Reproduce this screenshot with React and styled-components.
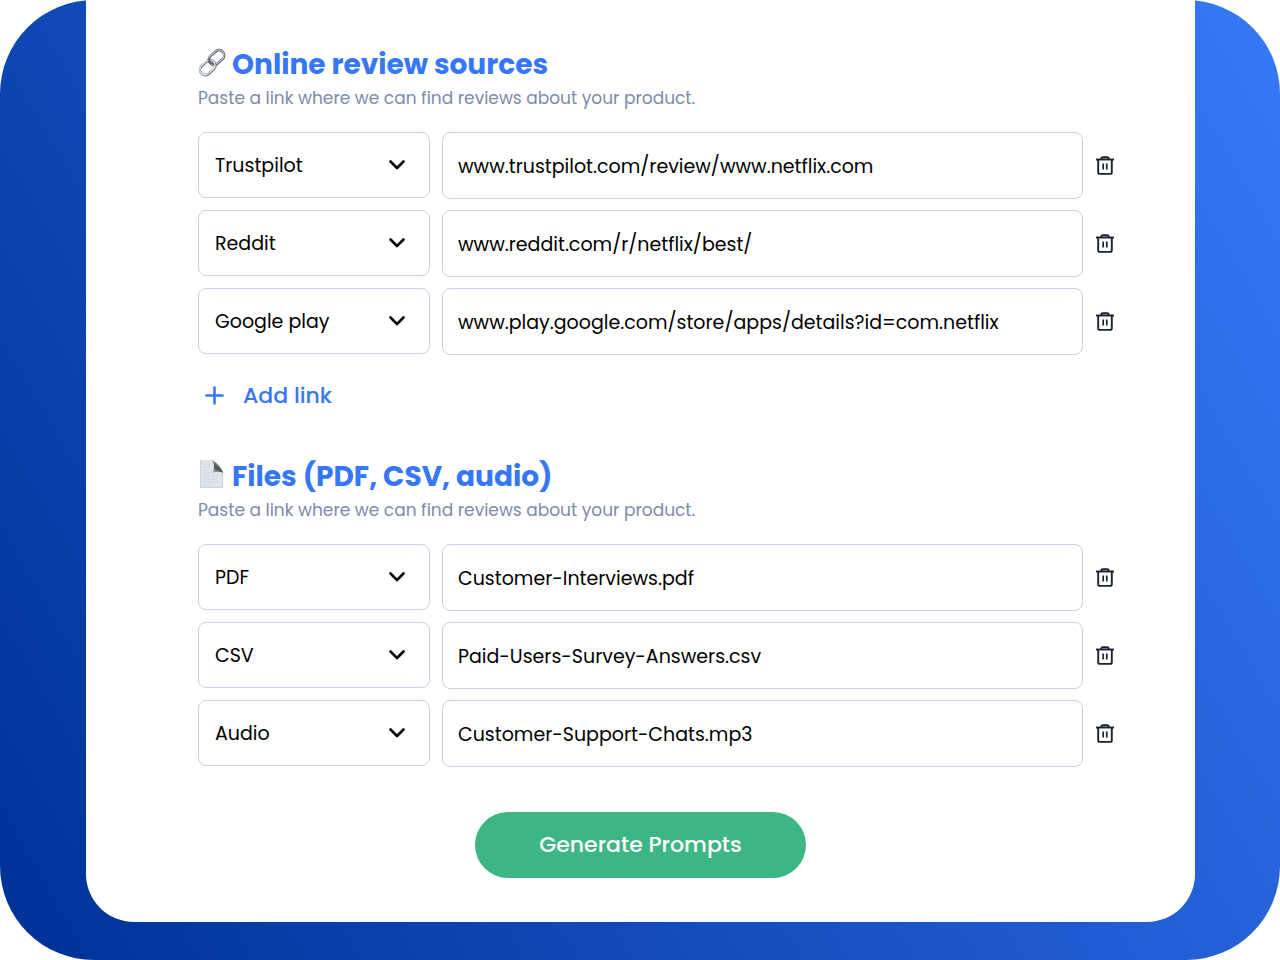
import { useState } from 'react';
import styled, { createGlobalStyle } from 'styled-components';

const GlobalStyle = createGlobalStyle`
  * {
    box-sizing: border-box;
  }
  body {
    margin: 0;
    background: #ffffff;
    font-family: Poppins, Inter, sans-serif;
    color: #000000;
  }
  button, input, select {
    font-family: inherit;
    color: inherit;
  }
`;

const Stage = styled.div`
  min-height: 100vh;
  padding: 0 85px 38px 86px;
  border-radius: 94px;
  background: linear-gradient(60deg, #003399 3%, #3577f6 98%);
`;

const Card = styled.form`
  display: flex;
  flex-direction: column;
  padding: 45px 112px 44px;
  background: #ffffff;
  border-radius: 0 0 48px 48px;
`;

const Section = styled.section`
  & + & {
    margin-top: 46px;
  }
`;

const Heading = styled.h2`
  display: flex;
  align-items: flex-start;
  gap: 6px;
  margin: 0;
  font-size: 28px;
  line-height: 40px;
  font-weight: 700;
  color: #3577f6;
`;

const HeadingIcon = styled.svg`
  width: 28px;
  height: 34px;
  flex: none;
`;

const Hint = styled.p`
  margin: 1px 0 22px;
  font-size: 17px;
  line-height: 24px;
  color: #7d8ba8;
`;

/* the delete buttons hang into the card's right padding */
const Rows = styled.div`
  display: grid;
  gap: 11px;
  margin-right: -32px;
`;

const Row = styled.div`
  display: grid;
  grid-template-columns: 232px 1fr 20px;
  column-gap: 12px;
  align-items: center;
`;

const SelectBox = styled.div`
  position: relative;
  align-self: start;
`;

const Select = styled.select`
  appearance: none;
  display: block;
  width: 100%;
  height: 66px;
  padding: 0 48px 0 16px;
  border: 1px solid #c9d1e1;
  border-radius: 8px;
  background: #ffffff;
  font-size: 19px;
`;

const Chevron = styled.svg`
  position: absolute;
  right: 24px;
  top: 24px;
  width: 18px;
  height: 18px;
  pointer-events: none;
`;

const TextField = styled.input`
  width: 100%;
  height: 67px;
  padding: 1px 15px 0;
  border: 1px solid #c9d1e1;
  border-radius: 8px;
  background: #ffffff;
  font-size: 19px;
`;

const PlainButton = styled.button`
  display: flex;
  align-items: center;
  padding: 0;
  border: 0;
  background: none;
  cursor: pointer;
`;

const AddButton = styled(PlainButton)`
  gap: 19px;
  height: 32px;
  margin: 24px 0 0 7px;
  font-size: 22px;
  font-weight: 500;
  color: #3577f6;
`;

const SubmitButton = styled.button`
  align-self: center;
  height: 66px;
  margin-top: 45px;
  padding: 0 64px 2px;
  border: 0;
  border-radius: 33px;
  background: #3db685;
  font-size: 22px;
  font-weight: 500;
  color: #ffffff;
  cursor: pointer;
`;

const LinkIcon = () => (
  <HeadingIcon viewBox="0 0 28 28" fill="none" aria-hidden="true">
    <g transform="rotate(-42 18.5 9.5)">
      <rect x="10" y="4.300" width="17" height="10.400" rx="5.200" stroke="#4b5057" strokeWidth="2.600" />
      <rect x="10" y="4" width="17" height="10.400" rx="5.200" stroke="#b9c2cf" strokeWidth="1.400" />
    </g>
    <g transform="rotate(-42 9.500 19.500)">
      <rect x="1" y="14.600" width="17" height="10.400" rx="5.200" stroke="#5b626b" strokeWidth="2.600" />
      <rect x="1" y="14.200" width="17" height="10.400" rx="5.200" stroke="#d8dfe9" strokeWidth="1.600" />
    </g>
    <path d="M11.500 10.500c-.7 2.500.5 4.500 3.500 5.500" stroke="#565c64" strokeWidth="1.800" strokeLinecap="round" />
  </HeadingIcon>
);

const PageIcon = () => (
  <HeadingIcon viewBox="0 0 28 28" fill="none" aria-hidden="true">
    <defs>
      <linearGradient id="fold" x1="15" y1="12" x2="21" y2="3" gradientUnits="userSpaceOnUse">
        <stop offset="0" stopColor="#a9adac" />
        <stop offset="0.5" stopColor="#4d5251" />
        <stop offset="1" stopColor="#8f9493" />
      </linearGradient>
    </defs>
    <path d="M2 0h11.500c2 0 3.500 1 5 3l6.500 8.500V28H2z" fill="#dfe5ec" />
    <path d="M2.500 .5V27.500H24.500V13" stroke="#cbd3dc" />
    <path d="M5 4h7M5 7h8M5 10h9M5 13h10M5 16h16M5 19h14M5 22h16M5 25h9" stroke="#cfd6df" strokeDasharray="3 1" />
    <path d="M12.500 0c3.500 1 4.500 5 2.500 13 3-1.800 7-1.800 10.300 0C24.500 9.500 19 1.500 12.500 0z" fill="url(#fold)" />
  </HeadingIcon>
);

const TrashIcon = () => (
  <svg width="20" height="20" viewBox="0 .8 20 20" fill="none" stroke="#1b2330" strokeWidth="1.900" aria-hidden="true">
    <path d="M1 4.300h18" />
    <path d="M6.300 4.200V3.700c0-.9.700-1.600 1.600-1.600h4.200c.9 0 1.600.7 1.600 1.600v.5" />
    <path d="M3.200 4.300v12.700c0 1 .7 1.700 1.700 1.700h10.200c1 0 1.700-.7 1.700-1.700V4.300" />
    <path d="M8.200 8.300v6M11.800 8.300v6" strokeWidth="1.700" />
  </svg>
);

const linkTypes = ['Trustpilot', 'Reddit', 'Google play'];
const fileTypes = ['PDF', 'CSV', 'Audio'];

const initialLinks = [
  { id: 1, type: 'Trustpilot', value: 'www.trustpilot.com/review/www.netflix.com' },
  { id: 2, type: 'Reddit', value: 'www.reddit.com/r/netflix/best/' },
  { id: 3, type: 'Google play', value: 'www.play.google.com/store/apps/details?id=com.netflix' },
];

const initialFiles = [
  { id: 4, type: 'PDF', value: 'Customer-Interviews.pdf' },
  { id: 5, type: 'CSV', value: 'Paid-Users-Survey-Answers.csv' },
  { id: 6, type: 'Audio', value: 'Customer-Support-Chats.mp3' },
];

const SourceRows = ({ items, setItems, types, label }) => {
  const update = (id, patch) =>
    setItems(items.map((item) => (item.id === id ? { ...item, ...patch } : item)));

  return (
    <Rows>
      {items.map(({ id, type, value }) => (
        <Row key={id}>
          <SelectBox>
            <Select aria-label={`${label} type`} value={type} onChange={(e) => update(id, { type: e.target.value })}>
              {types.map((name) => <option key={name}>{name}</option>)}
            </Select>
            <Chevron viewBox="0 0 18 18" fill="none" stroke="#000000" strokeWidth="2.600" strokeLinecap="round" strokeLinejoin="round">
              <path d="M2.500 5.500L9 12l6.500-6.500" />
            </Chevron>
          </SelectBox>
          <TextField aria-label={label} value={value} onChange={(e) => update(id, { value: e.target.value })} />
          <PlainButton type="button" aria-label="Delete" onClick={() => setItems(items.filter((item) => item.id !== id))}>
            <TrashIcon />
          </PlainButton>
        </Row>
      ))}
    </Rows>
  );
};

const App = () => {
  const [links, setLinks] = useState(initialLinks);
  const [files, setFiles] = useState(initialFiles);

  const addLink = () => setLinks([...links, { id: Date.now(), type: 'Trustpilot', value: '' }]);

  return (
    <>
      <GlobalStyle />
      <Stage>
        <Card onSubmit={(e) => e.preventDefault()}>
          <Section>
            <Heading><LinkIcon />Online review sources</Heading>
            <Hint>Paste a link where we can find reviews about your product.</Hint>
            <SourceRows items={links} setItems={setLinks} types={linkTypes} label="Link" />
            <AddButton type="button" onClick={addLink}>
              <svg width="19" height="19" viewBox="0 0 19 19" stroke="currentColor" strokeWidth="2.600" strokeLinecap="round" aria-hidden="true">
                <path d="M9.500 1.500v16M1.500 9.500h16" />
              </svg>
              Add link
            </AddButton>
          </Section>
          <Section>
            <Heading><PageIcon />Files (PDF, CSV, audio)</Heading>
            <Hint>Paste a link where we can find reviews about your product.</Hint>
            <SourceRows items={files} setItems={setFiles} types={fileTypes} label="File" />
          </Section>
          <SubmitButton type="submit">Generate Prompts</SubmitButton>
        </Card>
      </Stage>
    </>
  );
};

export default App;
